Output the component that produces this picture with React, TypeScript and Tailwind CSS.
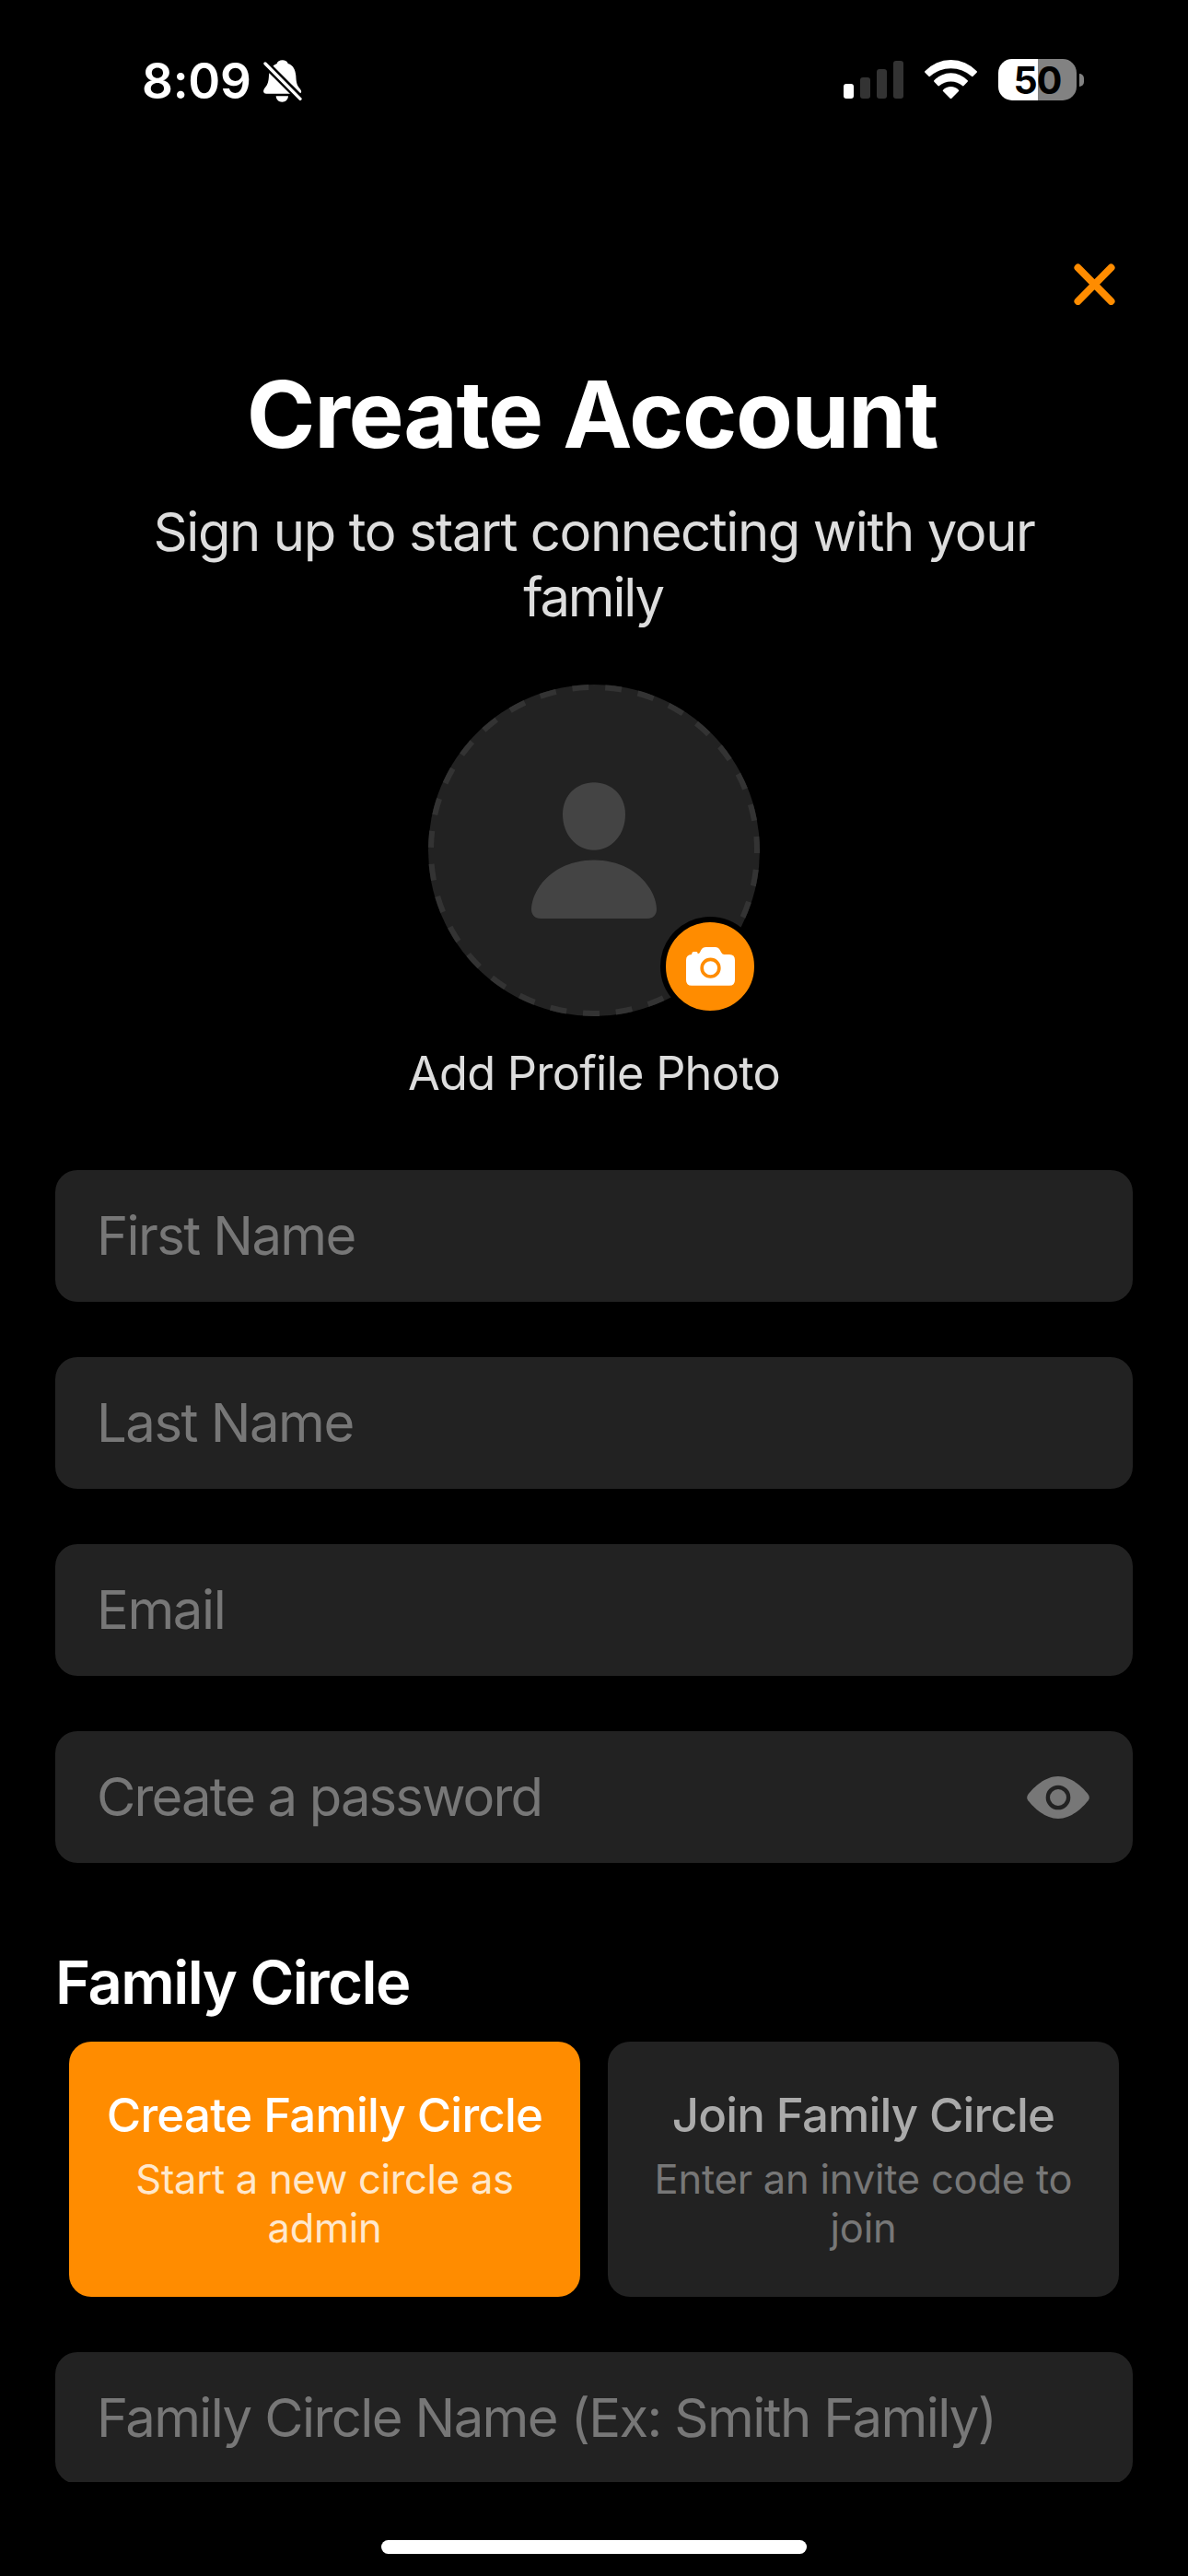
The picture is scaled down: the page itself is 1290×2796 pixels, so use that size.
import type { ReactNode } from "react";

function BellOff() {
  return (
    <svg viewBox="0 0 126 138" className="ml-[13px] mt-[9px] h-[46px] w-[42px]">
      <mask id="bell-cut">
        <rect width="126" height="138" fill="#fff" />
        <path d="M-14 -8L141 147" stroke="#000" strokeWidth="25" />
      </mask>
      <g mask="url(#bell-cut)" fill="#fff">
        <path d="M62 1C53 1 46 5 44 12C28 18 20 34 18 50C17 72 14 80 4 92C-3 102 0 110 10 110H114C126 110 125 102 120 95C108 82 107 72 106 52C104 32 98 18 80 12C78 5 71 1 62 1Z" />
      </g>
      <path d="M41 118H81C80 130 72 137 61 137S42 130 41 118Z" fill="#fff" />
      <path d="M6 12L120 127" stroke="#fff" strokeWidth="10" strokeLinecap="round" />
    </svg>
  );
}

function Wifi() {
  return (
    <svg viewBox="0 0 171 127" className="mt-[1px] h-[42.3px] w-[57px]" fill="#fff">
      <path d="M1 37A115 115 0 0 1 170 37Q172 39 170 41L157 54Q156 55 154 54A102 102 0 0 0 17 54Q15 55 14 54L1 41Q-1 39 1 37Z" />
      <path d="M31 67A74 74 0 0 1 140 67Q142 69 140 71L127 85Q126 86 124 85A59 59 0 0 0 47 85Q45 86 44 85L31 71Q29 69 31 67Z" />
      <path d="M60 98A36 36 0 0 1 111 98Q113 100 111 102L88 125Q85.500 128 83 125L60 102Q58 100 60 98Z" />
    </svg>
  );
}

function StatusBar() {
  return (
    <header className="flex h-[177px] items-start justify-between pl-[154px] pr-[113px] pt-14 text-white">
      <div className="flex items-start">
        <span className="text-[53px] font-semibold leading-[65px] tracking-[-0.26px]">8:09</span>
        <BellOff />
      </div>
      <div className="flex items-start pt-2">
        <div className="flex h-[43px] items-end gap-[7px]">
          <div className="h-4 w-[11px] rounded-[3px] bg-white" />
          <div className="h-[23px] w-[11px] rounded-[3px] bg-[#333]" />
          <div className="h-8 w-[11px] rounded-[3px] bg-[#333]" />
          <div className="h-[41px] w-[11px] rounded-[3px] bg-[#333]" />
        </div>
        <div className="ml-[23px] mr-[23px]">
          <Wifi />
        </div>
        <div className="flex h-[45px] w-[85px] items-center justify-center rounded-[15px] bg-[linear-gradient(90deg,#fff_43px,#828282_43px)]">
          <span className="text-[41px] font-bold leading-[46px] tracking-[-1px] text-black">50</span>
        </div>
        <div className="ml-[3px] mt-4 h-3.5 w-[5px] rounded-r-full bg-[#828282]" />
      </div>
    </header>
  );
}

function Avatar() {
  return (
    <div className="relative mt-[59px] h-[360px] w-[360px]">
      <svg viewBox="0 0 360 360" className="h-full w-full">
        <circle cx="180" cy="180" r="180" fill="#222" />
        <circle
          cx="180"
          cy="180"
          r="177"
          fill="none"
          stroke="#333"
          strokeWidth="6"
          strokeDasharray="17.937 17.937"
          transform="rotate(-4.85 180 180)"
        />
        <g fill="#444" transform="translate(112 106.300) scale(0.3333)">
          <path d="M204 0C147 0 102 42 102 104C102 170 147 220 204 220S306 170 306 104C306 42 261 0 204 0Z" />
          <path d="M30 443C12 443 0 431 0 413C0 394 8 368 22 346C58 288 125 253 204 253C283 253 350 288 386 346C400 368 408 394 408 413C408 431 396 443 378 443Z" />
        </g>
      </svg>
      <div className="absolute bottom-0 right-0 flex h-[108px] w-[108px] items-center justify-center rounded-full border-[6px] border-black bg-[#ff8c00]">
        <svg viewBox="0 0 159 125" className="h-[41.7px] w-[53px]">
          <path
            fill="#fff"
            d="M18 24Q19 15 24 15H33Q38 15 38 21Q42 22 45 17L49 9Q54 0 64 0H95Q105 0 110 9L115 18Q118 24 124 24H141Q159 24 159 42V107Q159 125 141 125H18Q0 125 0 107V42Q0 25 18 24Z"
          />
          <circle cx="79.500" cy="68" r="28" fill="#fff" stroke="#ff8c00" strokeWidth="11" />
        </svg>
      </div>
    </div>
  );
}

function Field({ children, icon }: { children: ReactNode; icon?: ReactNode }) {
  return (
    <div className="flex h-[143px] shrink-0 items-center justify-between rounded-3xl bg-[#222] pb-0.5 pl-[45px] pr-[47px] text-[58px] leading-[142px] text-[#777]">
      {children}
      {icon}
    </div>
  );
}

function Eye() {
  return (
    <svg viewBox="0 0 204 138" className="mt-0.5 h-[46px] w-[68px]">
      <path
        fill="#777"
        d="M4 59C24 34 60 0 102 0S180 34 200 59Q207 69 200 79C180 104 144 138 102 138S24 104 4 79Q-3 69 4 59Z"
      />
      <circle cx="102" cy="69" r="33.500" fill="#777" stroke="#222" strokeWidth="13" />
    </svg>
  );
}

export default function App() {
  return (
    <div className="flex h-[2796px] w-[1290px] flex-col overflow-hidden bg-black font-['Inter',sans-serif]">
      <StatusBar />
      <main className="flex h-[2517px] flex-col overflow-hidden px-[60px]">
        <div className="flex h-[212px] shrink-0 justify-end pr-[19.500px] pt-[109px]">
          <svg viewBox="0 0 45 45" className="h-[45px] w-[45px]">
            <path d="M4.500 4.500L40.500 41M40.500 4.500L4.500 41" stroke="#ff8c00" strokeWidth="8" strokeLinecap="round" />
          </svg>
        </div>

        <section className="flex shrink-0 flex-col items-center">
          <h1 className="pr-1 text-[101px] font-bold leading-[120px] tracking-[-1.4px] text-white">
            Create Account
          </h1>
          <p className="mt-[33px] text-center text-[58px] leading-[71px] text-[#ddd]">
            <span className="whitespace-nowrap tracking-[-1.42px]">Sign up to start connecting with your</span>
            <br />
            <span className="pr-0.5 tracking-[-2.2px]">family</span>
          </p>
          <Avatar />
          <p className="mt-[31px] text-[50.5px] leading-[61px] tracking-[-0.77px] text-[#ddd]">
            Add Profile Photo
          </p>
        </section>

        <section className="mt-[75px] flex shrink-0 flex-col gap-[60px]">
          <Field>
            <span className="tracking-[-1.62px]">First Name</span>
          </Field>
          <Field>
            <span className="tracking-[-1.49px]">Last Name</span>
          </Field>
          <Field>
            <span className="tracking-[-1.4px]">Email</span>
          </Field>
          <Field icon={<Eye />}>
            <span className="tracking-[-1.88px]">Create a password</span>
          </Field>
        </section>

        <section className="mt-[91px] flex shrink-0 flex-col">
          <h2 className="text-[65px] font-semibold leading-[78px] tracking-[-1.51px] text-white">
            Family Circle
          </h2>
          <div className="mt-[25px] grid grid-cols-2 gap-[30px] px-[15px]">
            <div className="flex h-[277px] flex-col items-center whitespace-nowrap rounded-3xl bg-[#ff8c00] pt-[50px]">
              <span className="text-[51px] font-medium leading-[60px] tracking-[-0.8px] text-white">
                Create Family Circle
              </span>
              <span className="mt-[13px] text-center text-[43.5px] leading-[53px] tracking-[-0.29px] text-[#ffe8cc]">
                Start a new circle as
                <br />
                admin
              </span>
            </div>
            <div className="flex h-[277px] flex-col items-center whitespace-nowrap rounded-3xl bg-[#222] pt-[50px]">
              <span className="text-[51px] font-medium leading-[60px] tracking-[-0.85px] text-[#aaa]">
                Join Family Circle
              </span>
              <span className="mt-[13px] text-center text-[43.5px] leading-[53px] tracking-[-0.22px] text-[#777]">
                Enter an invite code to
                <br />
                join
              </span>
            </div>
          </div>
        </section>

        <section className="mt-[60px] flex shrink-0 flex-col">
          <Field>
            <span className="whitespace-nowrap tracking-[-1.61px]">Family Circle Name (Ex: Smith Family)</span>
          </Field>
        </section>
      </main>
      <footer className="flex flex-1 justify-center pt-[63px]">
        <div className="h-[15px] w-[462px] rounded-full bg-white" />
      </footer>
    </div>
  );
}
